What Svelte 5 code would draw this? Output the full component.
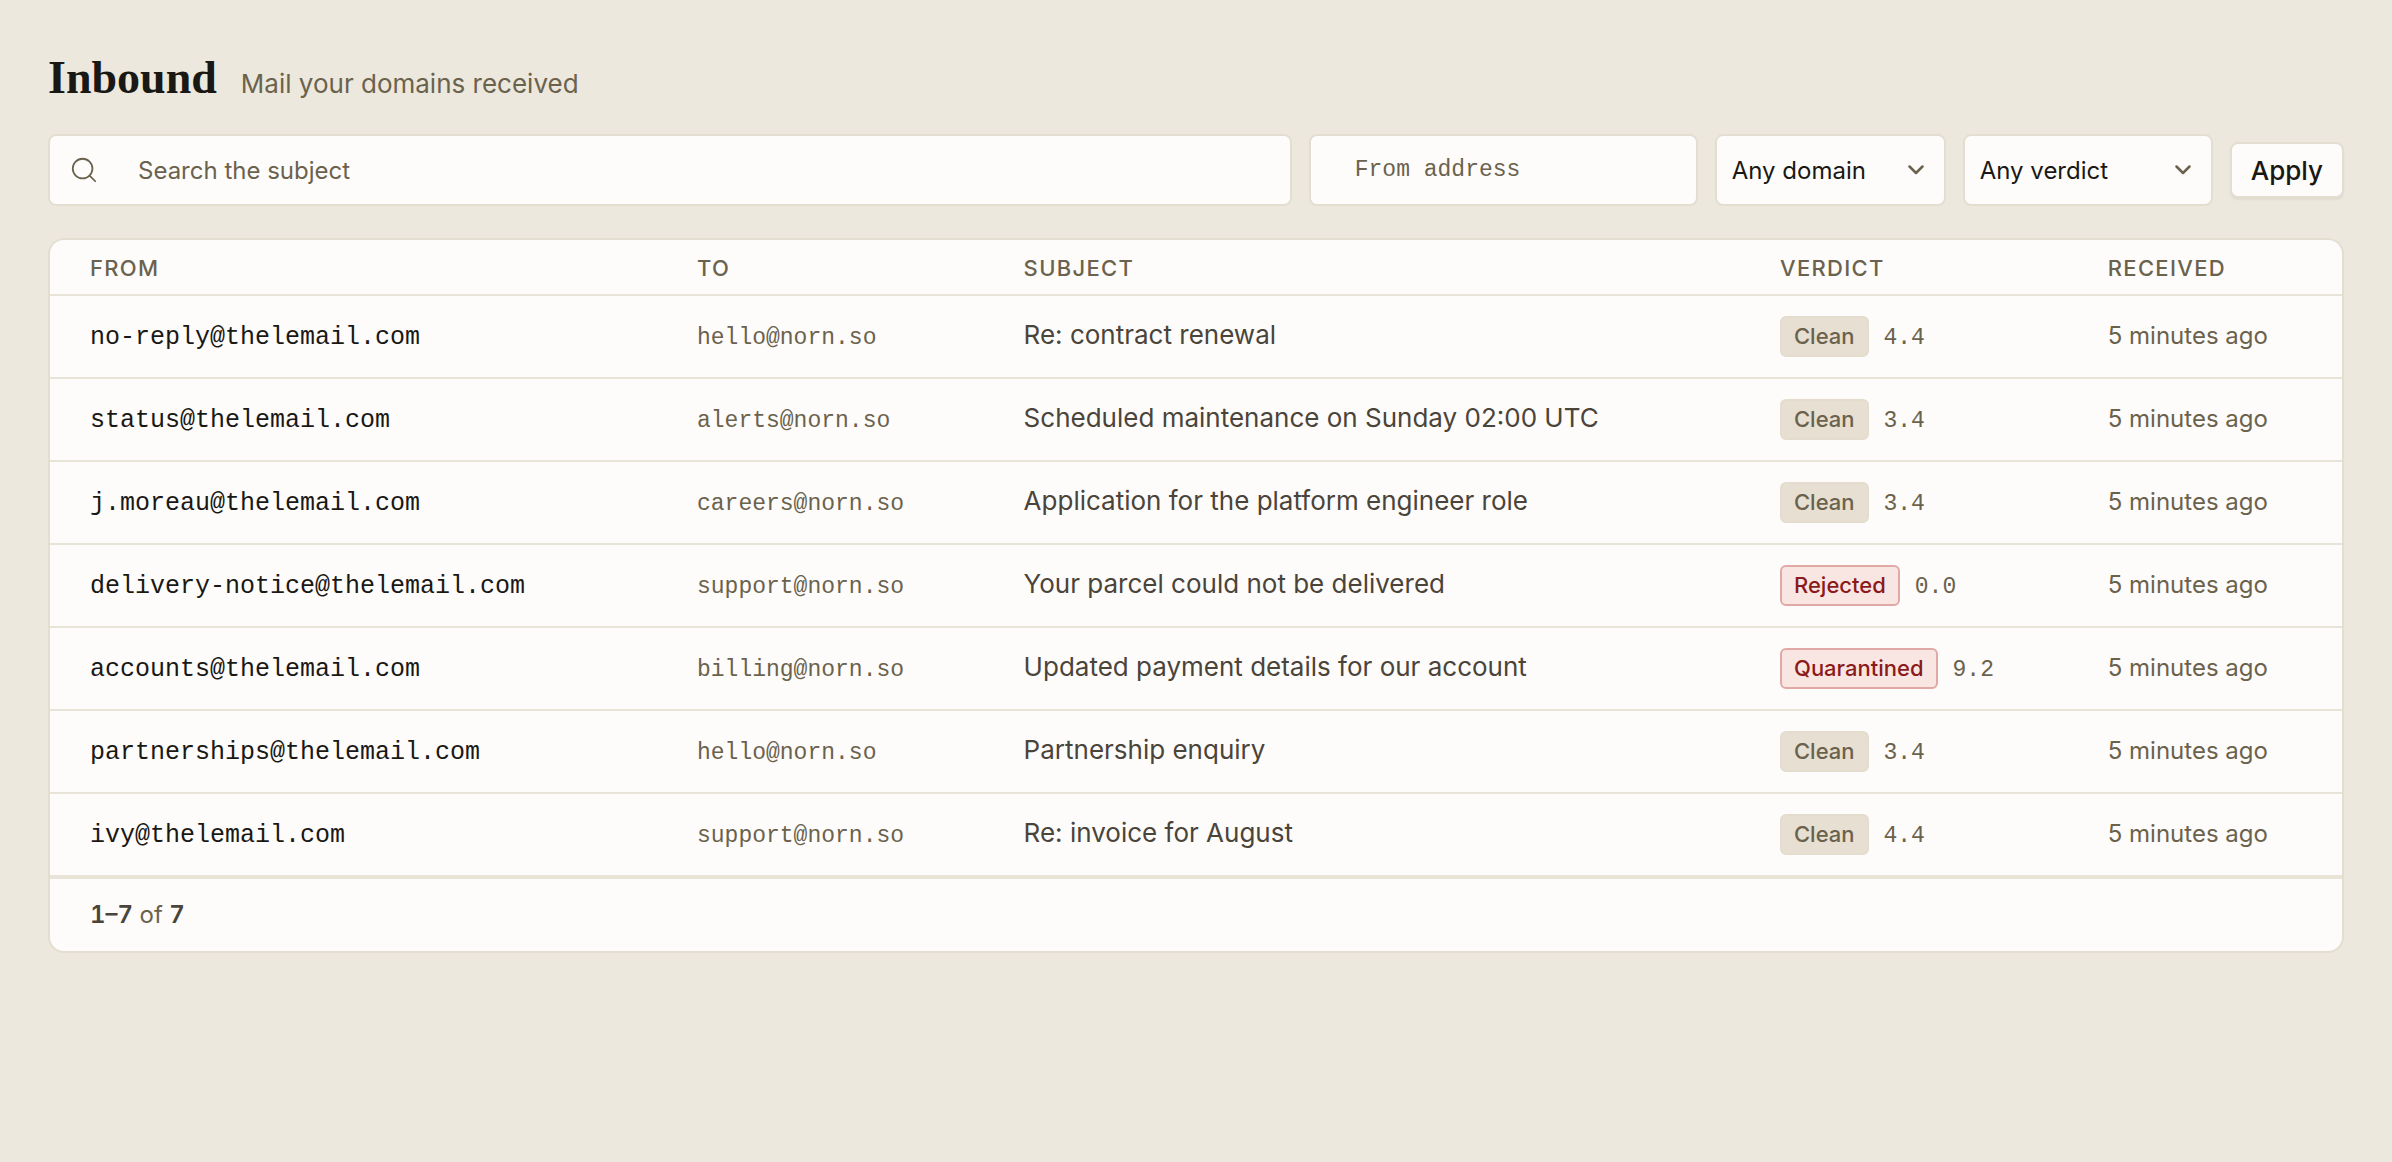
<script>
  const domains = ["Any domain", "norn.so"]
  const verdicts = ["Any verdict", "Clean", "Quarantined", "Rejected"]

  const messages = [
    { from: "no-reply@thelemail.com", to: "hello@norn.so", subject: "Re: contract renewal", verdict: "Clean", score: "4.4", received: "5 minutes ago" },
    { from: "status@thelemail.com", to: "alerts@norn.so", subject: "Scheduled maintenance on Sunday 02:00 UTC", verdict: "Clean", score: "3.4", received: "5 minutes ago" },
    { from: "j.moreau@thelemail.com", to: "careers@norn.so", subject: "Application for the platform engineer role", verdict: "Clean", score: "3.4", received: "5 minutes ago" },
    { from: "delivery-notice@thelemail.com", to: "support@norn.so", subject: "Your parcel could not be delivered", verdict: "Rejected", score: "0.0", received: "5 minutes ago" },
    { from: "accounts@thelemail.com", to: "billing@norn.so", subject: "Updated payment details for our account", verdict: "Quarantined", score: "9.2", received: "5 minutes ago" },
    { from: "partnerships@thelemail.com", to: "hello@norn.so", subject: "Partnership enquiry", verdict: "Clean", score: "3.4", received: "5 minutes ago" },
    { from: "ivy@thelemail.com", to: "support@norn.so", subject: "Re: invoice for August", verdict: "Clean", score: "4.4", received: "5 minutes ago" },
  ]

  let subject = $state("")
  let from = $state("")
  let domain = $state(domains[0])
  let verdict = $state(verdicts[0])

  const apply = (event) => {
    event.preventDefault()
  }
</script>

{#snippet caret()}
  <svg class="caret" viewBox="0 0 16 10" aria-hidden="true">
    <path d="M1.5 1.5 8 8l6.500-6.500" />
  </svg>
{/snippet}

<main class="page">
  <header class="head">
    <h1>Inbound</h1>
    <p>Mail your domains received</p>
  </header>

  <form class="filters" onsubmit={apply}>
    <label class="box search">
      <svg class="glass" viewBox="0 0 256 256" aria-hidden="true">
        <circle cx="116" cy="116" r="84" />
        <line x1="175.400" y1="175.400" x2="224" y2="224" />
      </svg>
      <input type="search" aria-label="Search the subject" placeholder="Search the subject" bind:value={subject} />
    </label>
    <input class="box from" type="text" aria-label="From address" placeholder="From address" bind:value={from} />
    <div class="pick domain">
      <select class="box" aria-label="Domain" bind:value={domain}>
        {#each domains as item}
          <option value={item}>{item}</option>
        {/each}
      </select>
      {@render caret()}
    </div>
    <div class="pick verdict">
      <select class="box" aria-label="Verdict" bind:value={verdict}>
        {#each verdicts as item}
          <option value={item}>{item}</option>
        {/each}
      </select>
      {@render caret()}
    </div>
    <button class="apply" type="submit">Apply</button>
  </form>

  <section class="card">
    <table>
      <colgroup>
        <col class="col-from" />
        <col class="col-to" />
        <col class="col-subject" />
        <col class="col-verdict" />
        <col />
      </colgroup>
      <thead>
        <tr>
          <th scope="col">From</th>
          <th scope="col">To</th>
          <th scope="col">Subject</th>
          <th scope="col">Verdict</th>
          <th scope="col">Received</th>
        </tr>
      </thead>
      <tbody>
        {#each messages as message}
          <tr>
            <td class="sender">{message.from}</td>
            <td class="mono">{message.to}</td>
            <td class="subject">{message.subject}</td>
            <td>
              <div class="result">
                <span class="badge" class:danger={message.verdict !== "Clean"}>{message.verdict}</span>
                <span class="mono">{message.score}</span>
              </div>
            </td>
            <td>{message.received}</td>
          </tr>
        {/each}
      </tbody>
    </table>
    <footer class="foot">
      <strong>1–{messages.length}</strong> of <strong>{messages.length}</strong>
    </footer>
  </section>
</main>

<style>
  :global(body) {
    background: #ece8dd;
  }
  .page {
    --ink: #1a1814;
    --body: #4a443a;
    --muted: #6b624d;
    --line: #e4ded0;
    --paper: #fdfcfb;
    --mono: "Liberation Mono", monospace;
    padding: 48px;
    font-family: Inter, sans-serif;
    font-size: 24px;
    color: var(--muted);
  }
  .head {
    display: flex;
    align-items: baseline;
    gap: 24px;
    margin-bottom: 26px;
  }
  h1 {
    margin: 0;
    font-family: "Liberation Serif", serif;
    font-size: 46px;
    font-weight: 700;
    line-height: 60px;
    color: var(--ink);
  }
  .head p {
    margin: 0;
    font-size: 26px;
  }
  .filters {
    display: flex;
    align-items: center;
    gap: 17px;
    margin-bottom: 32px;
  }
  .box {
    box-sizing: border-box;
    height: 72px;
    border: 2px solid var(--line);
    border-radius: 8px;
    background: var(--paper);
  }
  .search {
    flex: 1;
    min-width: 0;
    display: flex;
    align-items: center;
    gap: 39px;
    padding: 0 19px;
  }
  .search input {
    flex: 1;
    min-width: 0;
    border: none;
    padding: 0;
    background: none;
    outline: none;
    font: inherit;
    color: var(--ink);
  }
  .glass {
    width: 30px;
    height: 30px;
    flex: none;
    fill: none;
    stroke: var(--muted);
    stroke-width: 15;
    stroke-linecap: round;
  }
  .from {
    width: 389px;
    padding: 0 44px;
    font-family: var(--mono);
    font-size: 23px;
    color: var(--ink);
  }
  ::placeholder {
    color: var(--muted);
    opacity: 1;
  }
  .pick {
    position: relative;
  }
  .pick select {
    width: 100%;
    appearance: none;
    padding: 0 48px 0 15px;
    font-family: inherit;
    font-size: 24px;
    color: var(--ink);
  }
  .domain {
    width: 231px;
  }
  .verdict {
    width: 250px;
  }
  .caret {
    position: absolute;
    right: 22px;
    top: 50%;
    width: 16px;
    height: 10px;
    margin-top: -5px;
    fill: none;
    stroke: var(--muted);
    stroke-width: 2.500;
    stroke-linecap: round;
    stroke-linejoin: round;
    pointer-events: none;
  }
  .apply {
    height: 56px;
    border: 2px solid var(--line);
    border-radius: 8px;
    padding: 0 19px;
    background: var(--paper);
    box-shadow: 0 2px 2px rgba(26, 24, 20, 0.06);
    font-family: inherit;
    font-size: 26px;
    font-weight: 500;
    color: var(--ink);
    cursor: pointer;
  }
  .card {
    border: 2px solid var(--line);
    border-radius: 16px;
    background: var(--paper);
    overflow: hidden;
  }
  table {
    width: 100%;
    table-layout: fixed;
    border-collapse: separate;
    border-spacing: 0;
  }
  .col-from {
    width: 27.4%;
  }
  .col-to {
    width: 14.25%;
  }
  .col-subject {
    width: 33%;
  }
  .col-verdict {
    width: 14.3%;
  }
  th,
  td {
    box-sizing: border-box;
    padding: 0 19px;
    border-bottom: 2px solid #e9e4d8;
    text-align: left;
    white-space: nowrap;
  }
  th:first-child,
  td:first-child {
    padding-left: 40px;
  }
  th {
    height: 56px;
    padding-top: 2px;
    font-size: 22px;
    font-weight: 500;
    letter-spacing: 0.06em;
    text-transform: uppercase;
  }
  td {
    padding-top: 20px;
    padding-bottom: 20px;
    line-height: 37px;
    vertical-align: baseline;
  }
  .sender {
    font-family: var(--mono);
    font-size: 25px;
    color: var(--ink);
  }
  .mono {
    font-family: var(--mono);
    font-size: 23px;
  }
  .subject {
    font-size: 26px;
    color: var(--body);
  }
  .result {
    display: flex;
    align-items: baseline;
    gap: 15px;
  }
  .badge {
    border: 2px solid #e4dccd;
    border-radius: 6px;
    padding: 0 12px;
    background: #e7dfd1;
    font-size: 22px;
    font-weight: 500;
  }
  .badge.danger {
    border-color: #e0a9a6;
    background: #f9e6e3;
    color: #8b1a1a;
  }
  .foot {
    border-top: 2px solid #e9e4d8;
    padding: 0 40px;
    line-height: 72px;
    font-variant-numeric: tabular-nums;
  }
  .foot strong {
    font-weight: 600;
    color: var(--body);
  }
</style>
